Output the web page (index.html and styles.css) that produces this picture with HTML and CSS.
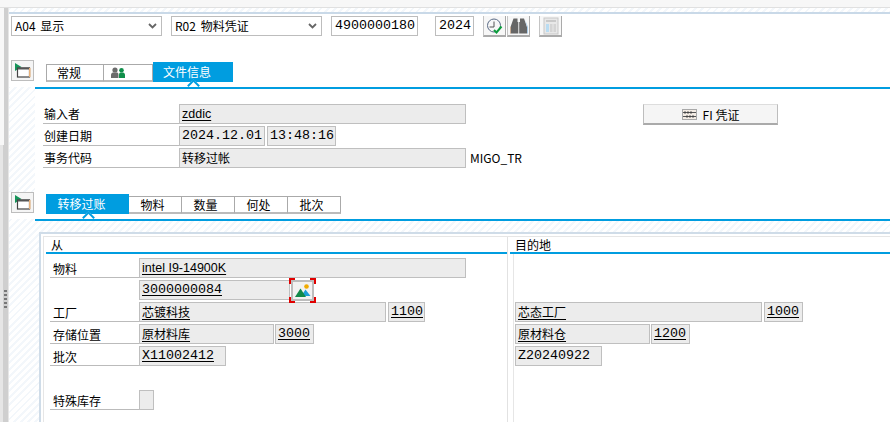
FILE: index.html
```html
<!DOCTYPE html>
<html lang="zh-CN">
<head>
<meta charset="utf-8">
<title>MIGO</title>
<link rel="stylesheet" href="styles.css">
</head>
<body>
<div class="chrome"></div>
<div class="shell">
  <aside class="rail"><div class="rail-top"></div><div class="rail-low"><div class="grip"><i></i><i></i><i></i><i></i><i></i></div></div></aside>
  <main class="main">
    <div class="toolbar">
      <div class="select"><span>A04 显示</span><svg class="chev" viewBox="0 0 9 6"><path d="M1 1l3.5 3.5L8 1" fill="none" stroke="#666" stroke-width="1.8"/></svg></div>
      <div class="select"><span>R02 物料凭证</span><svg class="chev" viewBox="0 0 9 6"><path d="M1 1l3.5 3.5L8 1" fill="none" stroke="#666" stroke-width="1.8"/></svg></div>
      <div class="input w87">4900000180</div>
      <div class="input w39 gap-l">2024</div>
      <div class="tool first"><svg viewBox="0 0 18 18" class="ico16"><circle cx="8" cy="8.500" r="6.500" fill="none" stroke="#5b6b86" stroke-width="1"/><path d="M8 4.500V10H3.500" fill="none" stroke="#555" stroke-width="1"/><path d="M8 13l2.500 2.500 5-6" fill="none" stroke="#0c9c3c" stroke-width="2"/></svg></div>
      <div class="tool"><svg viewBox="0 0 18 18" class="ico16"><path d="M3.500 1.500h4V5h.8v11.500H.5V10z" fill="#666"/><path d="M14 1.500h-4V5h-.8v11.500h7.800V10z" fill="#666"/><path d="M17 10v6.500h1V10L15 2.500z" fill="#a9cbe8"/><path d="M.5 10v6.500H0V10z" fill="#e0a878"/></svg></div>
      <div class="tool off"><svg viewBox="0 0 18 18" class="ico16"><rect x="2" y="1" width="14" height="16" fill="#e8e8e8" stroke="#c8c8c8"/><rect x="4" y="3" width="10" height="2" fill="#c9c9c9"/><rect x="4" y="7" width="3" height="8" fill="#b9dcf2"/><rect x="8" y="7" width="2.500" height="8" fill="#d4d4d4"/><rect x="11.500" y="7" width="2.500" height="8" fill="#d4d4d4"/></svg></div>
    </div>

    <div class="tabbar bar-one">
      <div class="toggle"><svg viewBox="0 0 16 15" class="ico-toggle"><path d="M0 0l6.500 4L0 8z" fill="#16945a"/><rect x="2.500" y="5" width="12" height="9" fill="#fff" stroke="#444" stroke-width="1.200"/><rect x="3" y="4.500" width="12" height="2" fill="#555"/><rect x="14" y="5" width="1.500" height="9" fill="#e8b17a"/></svg></div>
      <div class="tabs">
        <div class="tab w58 off6">常规</div>
        <div class="tab w49 tab-icon"><svg viewBox="0 0 16 12" class="ico-people"><circle cx="5" cy="3" r="2.600" fill="#6b6b6b"/><path d="M1 11V8c0-1.500 1-2.500 2-2.500h4c1 0 1.500 1 1.500 2.500v3z" fill="#6b6b6b"/><circle cx="11.500" cy="3.300" r="2.300" fill="#0f8f4a"/><path d="M9 11V8c0-1.500.5-2.500 1.500-2.500h2.500c1 0 2 1 2 2.500v3z" fill="#0f8f4a"/></svg></div>
        <div class="tab active w80 off6">文件信息</div>
      </div>
    </div>
    <div class="rule"></div>

    <div class="form">
      <div class="form-col">
        <div class="row"><div class="label">输入者</div><div class="box w287 link latin">zddic</div></div>
        <div class="row"><div class="label">创建日期</div><div class="box w86 mono">2024.12.01</div><div class="box w69 mono">13:48:16</div></div>
        <div class="row"><div class="label">事务代码</div><div class="box w287 cjk">转移过帐</div><div class="plain">MIGO_TR</div></div>
      </div>
      <div class="fi-btn"><svg viewBox="0 0 15 11" class="ico-abacus"><rect x=".5" y=".5" width="14" height="10" fill="#f4ece4" stroke="#a9a9a9"/><path d="M1 3.500h13M1 7.500h13" stroke="#555"/><path d="M3 2.500v2M6 2.500v2M9 2.500v2M5 6.500v2M8 6.500v2M11 6.500v2" stroke="#444" stroke-width="1.600"/></svg><span>FI 凭证</span></div>
    </div>

    <div class="tabbar bar-two">
      <div class="toggle"><svg viewBox="0 0 16 15" class="ico-toggle"><path d="M0 0l6.500 4L0 8z" fill="#16945a"/><rect x="2.500" y="5" width="12" height="9" fill="#fff" stroke="#444" stroke-width="1.200"/><rect x="3" y="4.500" width="12" height="2" fill="#555"/><rect x="14" y="5" width="1.500" height="9" fill="#e8b17a"/></svg></div>
      <div class="tabs">
        <div class="tab active w83 off6">转移过账</div>
        <div class="tab w53 off2">物料</div>
        <div class="tab w53 off2">数量</div>
        <div class="tab w53 off2">何处</div>
        <div class="tab w53 off2">批次</div>
      </div>
    </div>
    <div class="rule"></div>

    <section class="panel">
      <div class="panel-inner">
        <div class="col-from">
          <div class="col-head">从</div>
          <div class="rows">
            <div class="row"><div class="label short">物料</div><div class="box w327 link latin">intel I9-14900K</div></div>
            <div class="row"><div class="spacer"></div><div class="box w151 link mono">3000000084</div>
              <div class="img-btn"><span class="cn tl"></span><span class="cn tr"></span><span class="cn bl"></span><span class="cn br"></span><svg viewBox="0 0 16 14" class="ico-img"><circle cx="11.500" cy="2.500" r="2.300" fill="#f0ab00"/><path d="M7.500 10l3-4.500L15.500 12H9z" fill="#1b9ed8"/><path d="M0 13L5.500 4.500 11 13z" fill="#118a4a"/></svg></div>
            </div>
            <div class="row"><div class="label short">工厂</div><div class="box w247 link cjk">芯镀科技</div><div class="box w37 link mono">1100</div></div>
            <div class="row"><div class="label short">存储位置</div><div class="box w135 link cjk">原材料库</div><div class="box w39 link mono">3000</div></div>
            <div class="row"><div class="label short">批次</div><div class="box w87 link mono">X11002412</div></div>
            <div class="row"></div>
            <div class="row"><div class="label short">特殊库存</div><div class="box w15"></div></div>
          </div>
        </div>
        <div class="col-to">
          <div class="col-head head-to">目的地</div>
          <div class="rows rows-to">
            <div class="row"></div>
            <div class="row"></div>
            <div class="row"><div class="box w247 link cjk">芯态工厂</div><div class="box w39 link mono">1000</div></div>
            <div class="row"><div class="box w135 link cjk">原材料仓</div><div class="box w39 link mono">1200</div></div>
            <div class="row"><div class="box w87 mono">Z20240922</div></div>
          </div>
        </div>
      </div>
    </section>
  </main>
</div>
</body>
</html>
```

FILE: styles.css
```css
* { box-sizing: border-box; }
html, body { margin: 0; padding: 0; height: 422px; overflow: hidden; background: #fff; }
body { font-family: "Noto Sans CJK SC", "Liberation Sans", sans-serif; font-size: 12px; color: #000; width: 890px; }

.chrome { height: 8px; background: #f7f7f7; border-bottom: 1px solid #e0e0e0; }
.shell { display: flex; height: 414px; }

.rail { width: 9px; flex: none; display: flex; flex-direction: column; border-right: 1px solid #e6e6e6; }
.rail-top { height: 137px; background: linear-gradient(90deg, #f8f8f8 0 4px, #cfcfcf 4px 8px); }
.rail-low { flex: 1; background: linear-gradient(90deg, #e6e6e6 0 3px, #cfcfcf 3px 8px); padding-top: 145px; }
.grip { display: flex; flex-direction: column; gap: 2px; padding-left: 4px; }
.grip i { display: block; width: 3px; height: 2px; background: #777; }

.main {
  flex: 1; min-width: 0; padding-top: 4px;
  background: repeating-linear-gradient(135deg, #f3f7fb 0 2px, #fff 2px 5px);
}

.toolbar {
  display: flex; align-items: flex-start; height: 48px; padding: 2px 0 0 2px;
  background: #fff; border-top: 2px solid #c9d9e8;
}
.select {
  width: 151px; height: 20px; margin-right: 9px; padding: 0 2px 0 3px;
  border: 1px solid #bdbdbd; background: #fff;
  display: flex; align-items: center; justify-content: space-between;
  line-height: 18px; font-size: 12px; word-spacing: 2px;
}
.chev { width: 9px; height: 6px; margin-right: 2px; }
.input {
  height: 20px; border: 1px solid #bdbdbd; background: #fff; padding-left: 3px;
  font-family: "Liberation Mono", monospace; font-size: 13.33px; line-height: 18px;
}
.w87 { width: 87px; }
.w39 { width: 39px; }
.gap-l { margin-left: 17px; }
.tool {
  width: 23px; height: 21px; margin-left: 1px;
  border: 1px solid #c4c4c4; border-top: 0; border-bottom: 2px solid #aaa; border-right-color: #aaa;
  background: #f7f7f7; display: flex; align-items: center; justify-content: center;
}
.tool.first { margin-left: 9px; }
.tool.off { margin-left: 9px; }
.ico16 { width: 18px; height: 18px; }

.tabbar { display: flex; align-items: flex-start; height: 27px; padding-left: 2px; background: #fff; }
.toggle {
  width: 23px; height: 21px; flex: none;
  border: 1px solid #bdbdbd; background: #f5f5f5;
  display: flex; align-items: center; justify-content: center;
}
.ico-toggle { width: 16px; height: 15px; }
.tabs { display: flex; align-items: flex-end; height: 21px; margin-left: 12px; margin-top: 1px; }
.tab {
  height: 18px; border: 1px solid #aaa; border-bottom: 2px solid #bbb; border-left-width: 0;
  background: #fff; text-align: center; line-height: 16px; font-size: 12px; flex: none;
}
.tab:first-child { border-left-width: 1px; }
.tab-icon { display: flex; align-items: center; padding-left: 6px; }
.ico-people { width: 16px; height: 12px; }
.tab.active {
  position: relative; height: 20px; line-height: 19px; border: 0;
  background: #009de0; color: #fff;
}
.tab.active::after {
  content: ""; position: absolute; left: 50%; bottom: -8px; width: 7px; height: 7px;
  margin-left: -4px; background: #fff; border: solid #009de0; border-width: 2px 0 0 2px;
  transform: rotate(45deg);
}
.off6 { padding-right: 12px; }
.off2 { padding-right: 5px; }
.w58 { width: 58px; } .w49 { width: 49px; } .w80 { width: 80px; } .w83 { width: 83px; } .w53 { width: 53px; }

.rule { height: 2px; margin-left: 26px; background: #009de0; position: relative; }

.form { display: flex; align-items: flex-start; height: 103px; margin-left: 26px; padding: 15px 0 0 8px; background: #fff; }
.form-col { width: 600px; flex: none; display: flex; flex-direction: column; gap: 2px; }
.row { display: flex; height: 20px; align-items: stretch; }
.label { width: 136px; flex: none; padding-left: 1px; line-height: 20px; border-bottom: 1px solid #bbb; font-size: 12px; }
.label.short { width: 89px; padding-left: 3px; line-height: 22px; }
.spacer { width: 89px; flex: none; }
.box {
  height: 20px; flex: none; margin-right: 2px; padding-left: 2px;
  background: #ececec; border: 1px solid #bfbfbf; line-height: 18px; white-space: nowrap;
}
.box.link { text-decoration: underline; text-underline-offset: 2px; }
.mono { font-family: "Liberation Mono", monospace; font-size: 13.33px; }
.cjk { font-size: 12px; }
.latin { font-family: "Liberation Sans", sans-serif; font-size: 12.5px; }
.plain { padding-left: 2px; line-height: 19px; }
.w287 { width: 287px; } .w86 { width: 86px; } .w69 { width: 69px; }
.w327 { width: 327px; } .w151 { width: 151px; margin-right: 1px; } .w247 { width: 247px; }
.w37 { width: 37px; } .w135 { width: 135px; margin-right: 1px; } .w15 { width: 15px; }
.fi-btn {
  width: 135px; height: 21px; flex: none; background: #f5f5f5;
  border: 1px solid #bdbdbd; border-bottom: 2px solid #aaa; border-top-color: #ddd;
  display: flex; align-items: center; justify-content: center; gap: 6px;
}
.ico-abacus { width: 15px; height: 11px; }

.panel { margin: 11px 0 0 30px; padding: 2px 0 0 2px; height: 200px; border: solid #cfdce8; border-width: 2px 0 0 2px; background: #fff; }
.panel-inner { display: flex; height: 100%; border: solid #e6e6e6; border-width: 1px 0 0 1px; }
.col-from { width: 464px; flex: none; border-right: 1px solid #e2e2e2; padding-left: 2px; }
.col-to { flex: 1; min-width: 0; padding-left: 2px; }
.col-head { height: 17px; line-height: 15px; padding-left: 5px; border-bottom: 2px solid #009de0; font-size: 12px; }
.head-to { padding-left: 5px; }
.rows { display: flex; flex-direction: column; gap: 2px; padding: 4px 0 0 4px; }
.rows-to { margin-left: 3px; height: 180px; border-left: 1px solid #e6e6e6; padding-left: 1px; }

.img-btn {
  position: relative; width: 23px; height: 21px; flex: none;
  background: #f2f2f2; border: 2px solid #bdbdbd; display: flex; align-items: center; justify-content: center;
}
.ico-img { width: 16px; height: 14px; }
.cn { position: absolute; width: 6px; height: 6px; border: solid #e00000; }
.tl { left: -4px; top: -4px; border-width: 2px 0 0 2px; }
.tr { right: -4px; top: -4px; border-width: 2px 2px 0 0; }
.bl { left: -4px; bottom: -4px; border-width: 0 0 2px 2px; }
.br { right: -4px; bottom: -4px; border-width: 0 2px 2px 0; }
```
